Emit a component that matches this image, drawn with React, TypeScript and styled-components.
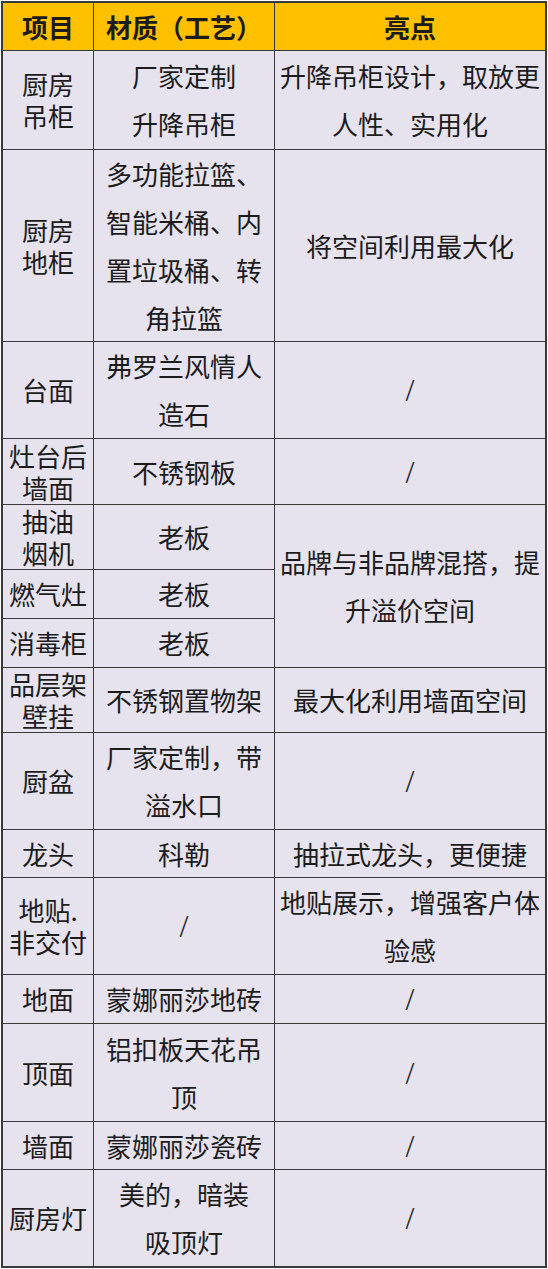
import React from "react";
import styled, { createGlobalStyle } from "styled-components";

const Global = createGlobalStyle`
  html, body { margin: 0; padding: 0; background: #ffffff; }
  body { font-family: "Noto Sans CJK SC", "Noto Sans", sans-serif; }
`;

const rowHeights = [47, 98, 191, 96, 65, 64, 48, 48, 64, 96, 47, 96, 48, 97, 47, 96];

const Table = styled.div`
  margin: 1px 0 0 1px;
  width: max-content;
  display: grid;
  grid-template-columns: 90px 180px 270px;
  grid-template-rows: ${rowHeights.map((h) => `${h}px`).join(" ")};
  gap: 1px;
  background: #3a3a3a;
  border: 2px solid #3a3a3a;
`;

const Cell = styled.div<{ $col: number; $span?: number; $head?: boolean }>`
  grid-column: ${(p) => p.$col};
  ${(p) => (p.$span ? `grid-row: span ${p.$span};` : "")}
  background: ${(p) => (p.$head ? "#FFC000" : "#E6E2EE")};
  color: #1c1c1c;
  display: flex;
  align-items: center;
  justify-content: center;
  text-align: center;
  font-size: 26px;
  font-weight: ${(p) => (p.$head ? 700 : 400)};
  line-height: ${(p) => (p.$col === 1 ? "32px" : "48px")};
`;

const Text = styled.span`
  white-space: pre;
`;

const Slash = styled.span`
  font-family: "Liberation Serif", serif;
  font-size: 32px;
  font-weight: 400;
  color: #2a2a2a;
`;

type Content = string | "slash";

type Row = {
  item: string;
  material: Content;
  highlight?: Content;
  span?: number;
};

const rows: Row[] = [
  { item: "厨房\n吊柜", material: "厂家定制\n升降吊柜", highlight: "升降吊柜设计，取放更\n人性、实用化" },
  { item: "厨房\n地柜", material: "多功能拉篮、\n智能米桶、内\n置垃圾桶、转\n角拉篮", highlight: "将空间利用最大化" },
  { item: "台面", material: "弗罗兰风情人\n造石", highlight: "slash" },
  { item: "灶台后\n墙面", material: "不锈钢板", highlight: "slash" },
  { item: "抽油\n烟机", material: "老板", highlight: "品牌与非品牌混搭，提\n升溢价空间", span: 3 },
  { item: "燃气灶", material: "老板" },
  { item: "消毒柜", material: "老板" },
  { item: "品层架\n壁挂", material: "不锈钢置物架", highlight: "最大化利用墙面空间" },
  { item: "厨盆", material: "厂家定制，带\n溢水口", highlight: "slash" },
  { item: "龙头", material: "科勒", highlight: "抽拉式龙头，更便捷" },
  { item: "地贴.\n非交付", material: "slash", highlight: "地贴展示，增强客户体\n验感" },
  { item: "地面", material: "蒙娜丽莎地砖", highlight: "slash" },
  { item: "顶面", material: "铝扣板天花吊\n顶", highlight: "slash" },
  { item: "墙面", material: "蒙娜丽莎瓷砖", highlight: "slash" },
  { item: "厨房灯", material: "美的，暗装\n吸顶灯", highlight: "slash" },
];

const renderContent = (c: Content) =>
  c === "slash" ? <Slash>/</Slash> : <Text>{c}</Text>;

export default function App() {
  return (
    <>
      <Global />
      <Table>
        <Cell $col={1} $head>项目</Cell>
        <Cell $col={2} $head>材质（工艺）</Cell>
        <Cell $col={3} $head>亮点</Cell>
        {rows.map((r, i) => (
          <React.Fragment key={i}>
            <Cell $col={1}>{renderContent(r.item)}</Cell>
            <Cell $col={2}>{renderContent(r.material)}</Cell>
            {r.highlight !== undefined && (
              <Cell $col={3} $span={r.span}>
                {renderContent(r.highlight)}
              </Cell>
            )}
          </React.Fragment>
        ))}
      </Table>
    </>
  );
}
